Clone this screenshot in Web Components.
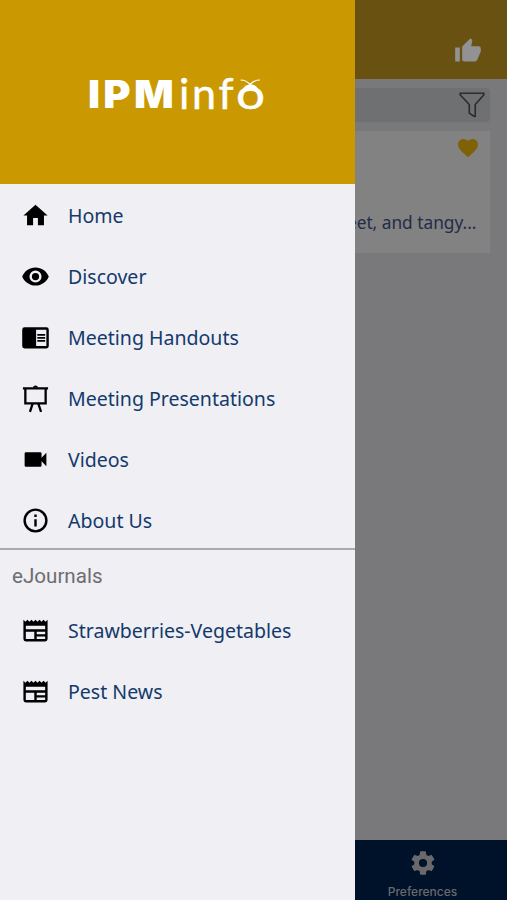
<!DOCTYPE html>
<html lang="en">
<head>
<meta charset="utf-8">
<title>IPMinfo</title>
<style>
html, body { margin: 0; height: 100%; overflow: hidden; }
body { font-family: "Noto Sans", sans-serif; color: #143a6b; }
</style>
</head>
<body>
<ipm-app>
    <ipm-screen slot="screen"></ipm-screen>
    <ipm-drawer slot="drawer">
        <ipm-logo slot="header"></ipm-logo>
        <ipm-item icon="home">Home</ipm-item>
        <ipm-item icon="eye">Discover</ipm-item>
        <ipm-item icon="reader">Meeting Handouts</ipm-item>
        <ipm-item icon="board">Meeting Presentations</ipm-item>
        <ipm-item icon="video">Videos</ipm-item>
        <ipm-item icon="info">About Us</ipm-item>
        <ipm-section>eJournals</ipm-section>
        <ipm-item icon="news">Strawberries-Vegetables</ipm-item>
        <ipm-item icon="news">Pest News</ipm-item>
    </ipm-drawer>
</ipm-app>

<script>
// All icons share a 24 unit grid
const ICONS = {
    home: '<path d="M10 20v-6h4v6h5v-8h3L12 3 2 12h3v8z"/>',
    eye: '<path d="M12 4.500C7 4.500 2.730 7.610 1 12c1.730 4.390 6 7.500 11 7.500s9.270-3.110 11-7.500c-1.730-4.390-6-7.500-11-7.500zM12 17a5 5 0 1 1 0-10 5 5 0 0 1 0 10zm0-8a3 3 0 1 0 0 6 3 3 0 0 0 0-6z"/>',
    reader: '<path d="M21 3.500H3a2 2 0 0 0-2 2v13.500a2 2 0 0 0 2 2h18a2 2 0 0 0 2-2V5.500a2 2 0 0 0-2-2zm0 15.500h-8.500V5.500H21V19zm-1-10h-6.500v1.500H20V9zm0 2.500h-6.500V13H20v-1.500zm0 2.500h-6.500v1.500H20V14z"/>',
    board: '<g fill="none" stroke="#000" stroke-width="1.900"><path d="M1.600 3.700h20.800M3.600 4v12h16.800V4M9.600 16.500 7.400 23M14.400 16.500l2.200 6.500"/></g><path d="M10 3.200a2 2 0 0 1 4 0z"/>',
    video: '<path d="M17 10.500V7a1 1 0 0 0-1-1H4a1 1 0 0 0-1 1v10a1 1 0 0 0 1 1h12a1 1 0 0 0 1-1v-3.500l4 4v-11z"/>',
    info: '<path d="M11 17h2v-6h-2v6zm1-15a10 10 0 1 0 0 20 10 10 0 0 0 0-20zm0 18a8 8 0 1 1 0-16 8 8 0 0 1 0 16zM11 9h2V7h-2z"/>',
    news: '<path d="M22 3l-1.670 1.670L18.670 3 17 4.670 15.330 3l-1.660 1.670L12 3l-1.670 1.670L8.670 3 7 4.670 5.330 3 3.670 4.670 2 3v16a2 2 0 0 0 2 2h16a2 2 0 0 0 2-2V3zM11 19H4v-6h7v6zm9 0h-7v-2h7v2zm0-4h-7v-2h7v2zm0-4H4V8h16v3z"/>',
    thumb: '<path d="M1 21h4V9H1v12zm22-11a2 2 0 0 0-2-2h-6.310l.95-4.570.03-.32c0-.41-.17-.79-.44-1.060L14.170 1 7.590 7.590C7.220 7.950 7 8.450 7 9v10a2 2 0 0 0 2 2h9c.83 0 1.540-.5 1.840-1.220l3.020-7.050c.09-.23.14-.47.14-.73z"/>',
    funnel: '<path d="M1 1.200h22v1.300L15 11.500v11l-1.200-.1L9.500 19.500v-8L1 2.500z" fill="none" stroke="currentColor" stroke-width="1.500" stroke-linejoin="round"/>',
    heart: '<path d="m12 21.350-1.450-1.320C5.400 15.360 2 12.280 2 8.500 2 5.420 4.420 3 7.500 3c1.740 0 3.410.81 4.500 2.090C13.090 3.810 14.760 3 16.500 3 19.580 3 22 5.420 22 8.500c0 3.780-3.400 6.860-8.550 11.540z"/>',
    gear: '<path d="M19.430 12.980c.04-.32.07-.64.07-.98s-.03-.66-.07-.98l2.110-1.650c.19-.15.24-.42.12-.64l-2-3.460c-.12-.22-.39-.3-.61-.22l-2.490 1c-.52-.4-1.080-.73-1.690-.98l-.38-2.650A.49.49 0 0 0 14 2h-4c-.25 0-.46.18-.49.42l-.38 2.650c-.61.25-1.170.59-1.690.98l-2.490-1c-.23-.09-.49 0-.61.22l-2 3.460c-.13.22-.07.49.12.64l2.110 1.650c-.04.32-.07.65-.07.98s.03.66.07.98l-2.110 1.650c-.19.15-.24.42-.12.64l2 3.460c.12.22.39.3.61.22l2.490-1c.52.4 1.080.73 1.690.98l.38 2.650c.03.24.24.42.49.42h4c.25 0 .46-.18.49-.42l.38-2.650c.61-.25 1.170-.59 1.690-.98l2.490 1c.23.09.49 0 .61-.22l2-3.460c.12-.22.07-.49-.12-.64l-2.110-1.650zM12 15.500a3.500 3.500 0 1 1 0-7 3.500 3.500 0 0 1 0 7z"/>'
};

class IpmElement extends HTMLElement {
    constructor() {
        super();
        this.attachShadow({ mode: 'open' });
    }

    connectedCallback() {
        this.shadowRoot.innerHTML = this.render();
    }
}

class IpmIcon extends IpmElement {
    render() {
        return `
            <style>
                :host { display: block; width: 29px; height: 29px; flex-shrink: 0; }
                svg { display: block; width: 100%; height: 100%; fill: currentColor; overflow: visible; }
            </style>
            <svg viewBox="0 0 24 24" aria-hidden="true">${ICONS[this.getAttribute('name')]}</svg>
        `;
    }
}

class IpmLogo extends IpmElement {
    render() {
        return `
            <style>
                :host { display: block; }
                svg { display: block; }
            </style>
            <svg width="190" height="64" viewBox="0 0 190 64" fill="#fff">
                <text x="0 14.200 42.700" y="48.300" transform="scale(1.080 1)"
                    font-family="Inter, sans-serif" font-weight="900" font-size="38.5">IPM</text>
                <g font-family="Lato, sans-serif" font-size="43" stroke="#fff" stroke-width=".5">
                    <text x="91 104 130.500" y="48.500">inf</text>
                    <text x="148" y="48.700" textLength="29" lengthAdjust="spacingAndGlyphs">o</text>
                </g>
                <path d="M154 33c.5-5 3-8.500 8.500-8.500s8 3.500 8.500 8.500q-8.500-4-17 0z"/>
                <path d="M152.500 20c4 0 7 1.500 9.500 4.500 2.500-3 6-4.500 10-4.500"
                    fill="none" stroke="#fff" stroke-width="1.200"/>
            </svg>
        `;
    }
}

class IpmItem extends IpmElement {
    render() {
        return `
            <style>
                :host {
                    display: flex;
                    align-items: center;
                    gap: 18.5px;
                    height: 61px;
                    padding-left: 20.5px;
                    font-size: 19.55px;
                    white-space: nowrap;
                }
                ipm-icon { color: #000; }
            </style>
            <ipm-icon name="${this.getAttribute('icon')}"></ipm-icon>
            <span><slot></slot></span>
        `;
    }
}

class IpmSection extends IpmElement {
    render() {
        return `
            <style>
                :host {
                    display: flex;
                    align-items: center;
                    box-sizing: border-box;
                    height: 52px;
                    margin-top: -2.6px;
                    padding: 2px 0 0 12px;
                    border-top: 2px solid #aaaaad;
                    font: 20.6px Roboto, sans-serif;
                    color: #6d6d70;
                }
            </style>
            <span><slot></slot></span>
        `;
    }
}

class IpmDrawer extends IpmElement {
    render() {
        return `
            <style>
                :host { display: flex; flex-direction: column; background: #efeff4; }
                header {
                    box-sizing: border-box;
                    height: 184px;
                    flex-shrink: 0;
                    padding: 60px 0 0 88px;
                    background: #ca9800;
                }
                nav { padding-top: .6px; }
            </style>
            <header><slot name="header"></slot></header>
            <nav><slot></slot></nav>
        `;
    }
}

// The list screen, in the dimmed colours it has while the drawer is open
class IpmScreen extends IpmElement {
    render() {
        return `
            <style>
                :host { display: flex; flex-direction: column; height: 100%; background: #79797c; }
                header {
                    display: flex;
                    justify-content: flex-end;
                    box-sizing: border-box;
                    height: 79px;
                    padding: 37px 25px 0 0;
                    background: #685111;
                    color: #929295;
                }
                header ipm-icon { width: 28px; height: 28px; }
                main { flex: 1; padding: 9px 17px 0 8px; }
                .search {
                    display: flex;
                    align-items: center;
                    justify-content: flex-end;
                    box-sizing: border-box;
                    height: 34px;
                    padding-right: 5px;
                    border-radius: 4px;
                    background: #6e7072;
                    color: #2b2c30;
                }
                .search ipm-icon { width: 26px; height: 26px; }
                .card {
                    display: flex;
                    flex-direction: column;
                    align-items: flex-end;
                    justify-content: space-between;
                    box-sizing: border-box;
                    height: 122px;
                    margin-top: 9px;
                    padding: 5px 13.5px 18px;
                    background: #828282;
                    color: #222c49;
                    font-size: 17.3px;
                    line-height: 24px;
                }
                .card ipm-icon { width: 24px; height: 24px; margin-right: -3px; color: #806106; }
                footer {
                    display: flex;
                    justify-content: flex-end;
                    height: 60px;
                    background: #00122a;
                    color: #69696b;
                }
                .tab {
                    display: flex;
                    flex-direction: column;
                    align-items: center;
                    width: 169px;
                    padding-top: 9px;
                    font: 500 12px/18px Inter, sans-serif;
                }
                .tab ipm-icon { width: 28px; height: 28px; margin-bottom: 6px; }
            </style>
            <header><ipm-icon name="thumb"></ipm-icon></header>
            <main>
                <div class="search"><ipm-icon name="funnel"></ipm-icon></div>
                <div class="card">
                    <ipm-icon name="heart"></ipm-icon>
                    <span>eet, and tangy...</span>
                </div>
            </main>
            <footer>
                <div class="tab"><ipm-icon name="gear"></ipm-icon><span>Preferences</span></div>
            </footer>
        `;
    }
}

class IpmApp extends IpmElement {
    render() {
        return `
            <style>
                :host { display: block; position: relative; width: 507px; height: 900px; overflow: hidden; }
                ::slotted([slot="drawer"]) { position: absolute; top: 0; left: 0; width: 355px; height: 100%; }
            </style>
            <slot name="screen"></slot>
            <slot name="drawer"></slot>
        `;
    }
}

customElements.define('ipm-icon', IpmIcon);
customElements.define('ipm-logo', IpmLogo);
customElements.define('ipm-item', IpmItem);
customElements.define('ipm-section', IpmSection);
customElements.define('ipm-drawer', IpmDrawer);
customElements.define('ipm-screen', IpmScreen);
customElements.define('ipm-app', IpmApp);
</script>
</body>
</html>
